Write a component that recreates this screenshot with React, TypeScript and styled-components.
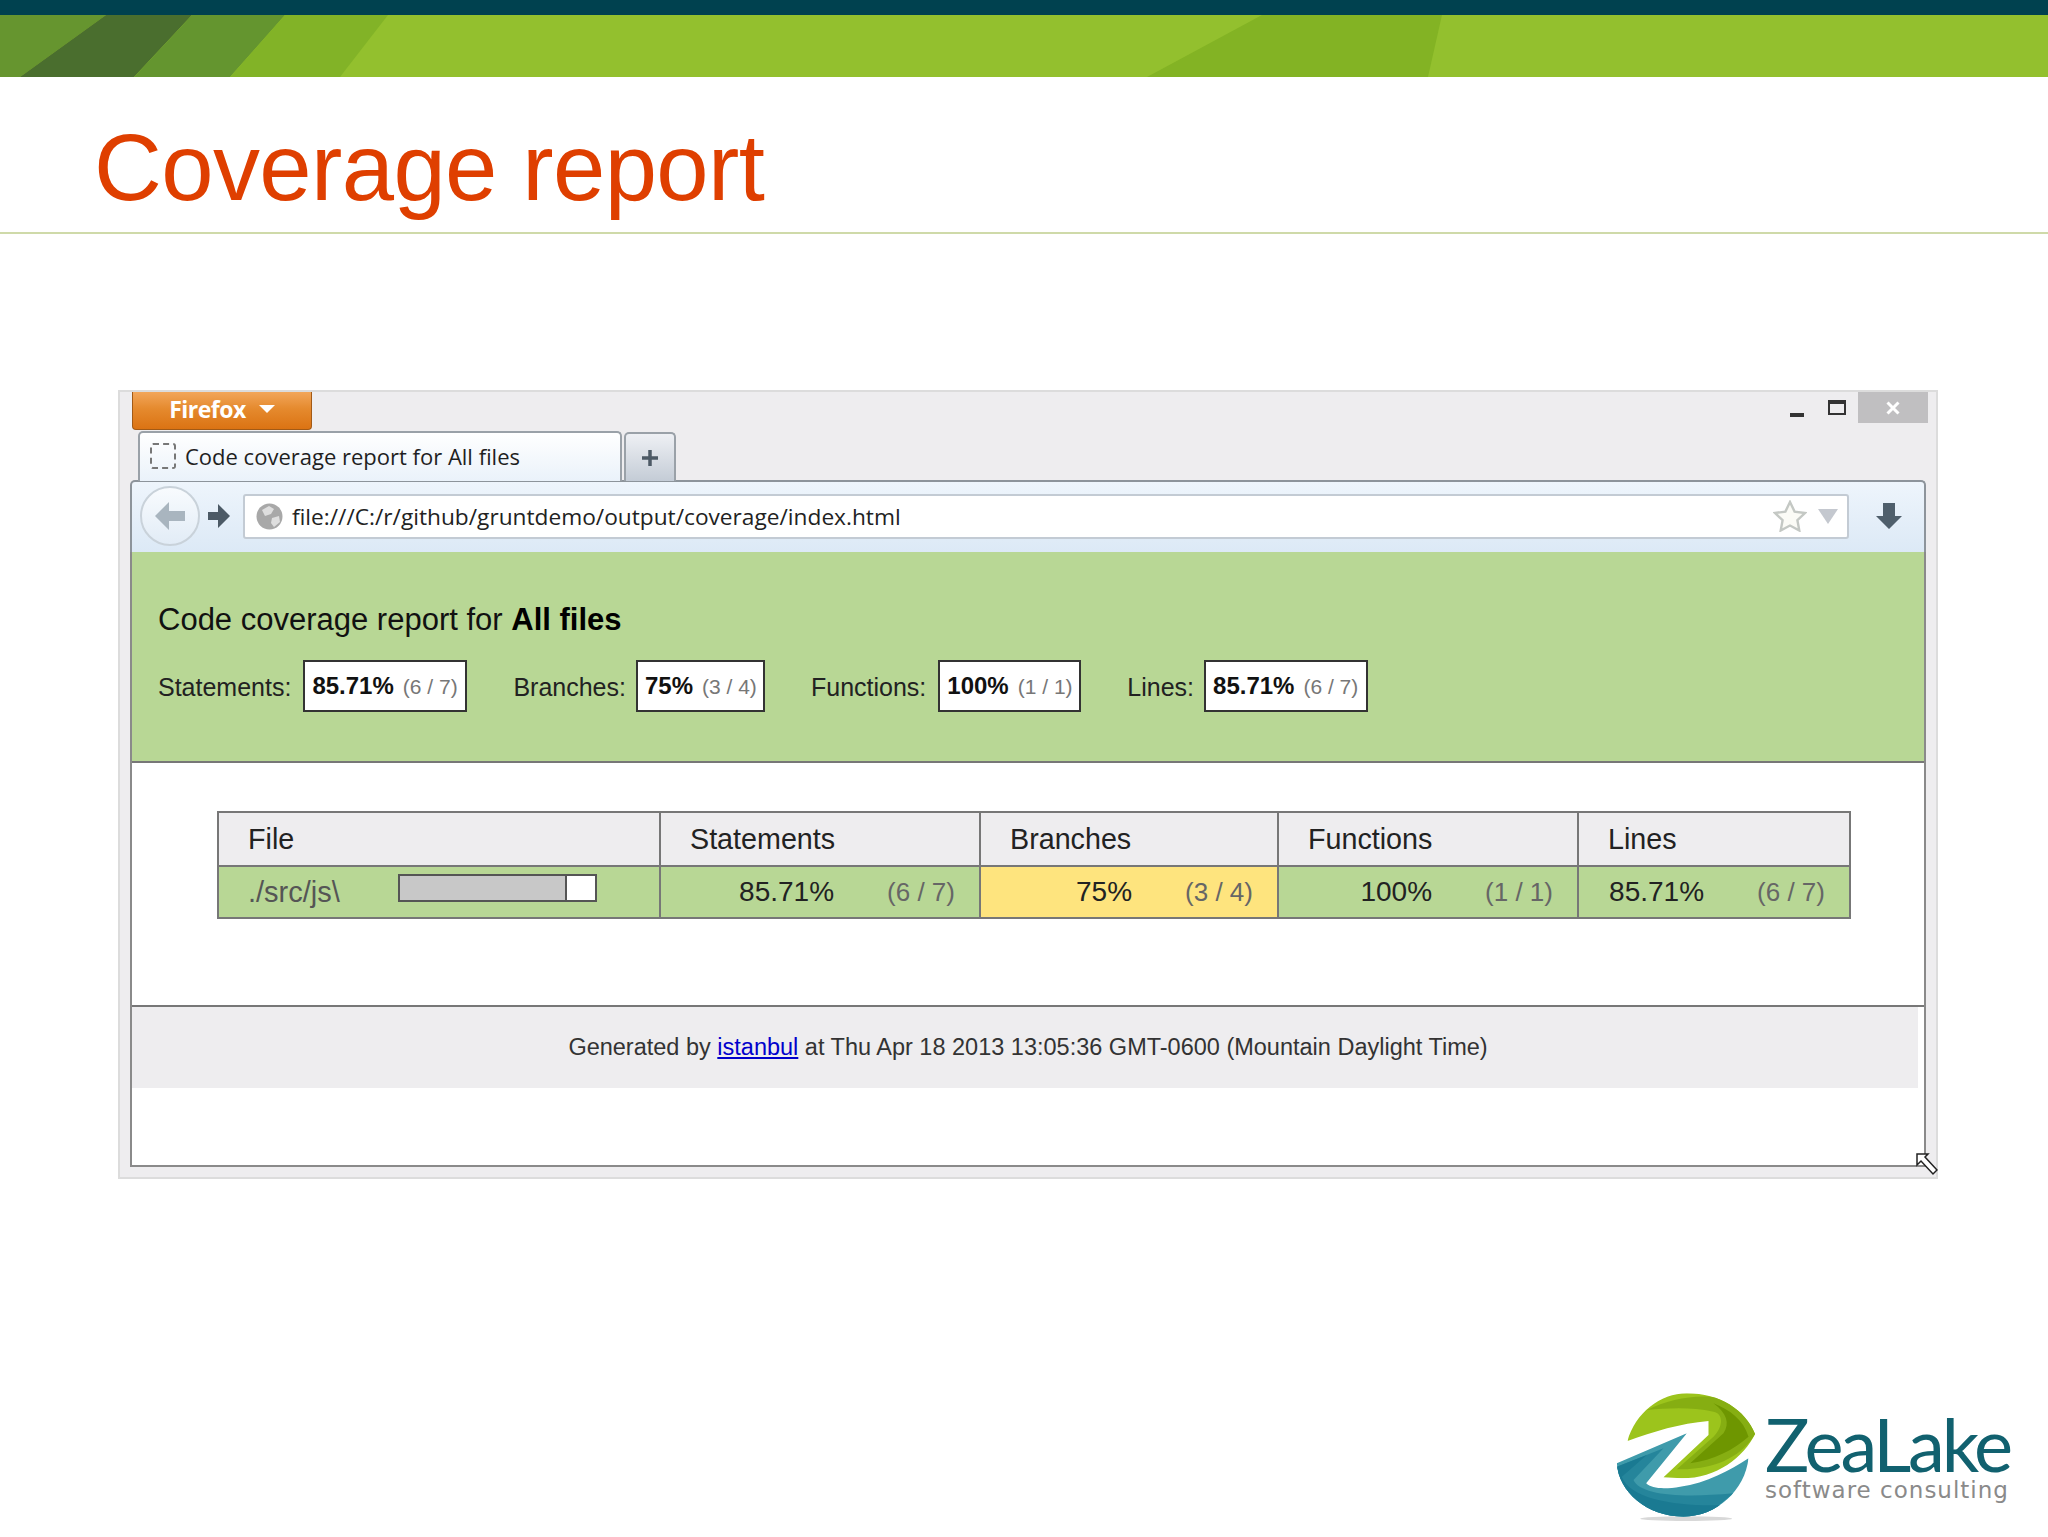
import React from 'react';
import styled, { createGlobalStyle } from 'styled-components';

const GlobalStyle = createGlobalStyle`
  html, body {
    margin: 0;
    padding: 0;
    background: #fff;
    font-family: "Liberation Sans", Arial, sans-serif;
  }
`;

const stats = [
  { label: 'Statements:', pct: '85.71%', frac: '(6 / 7)', width: 164, gap: 0, labelGap: 12 },
  { label: 'Branches:', pct: '75%', frac: '(3 / 4)', width: 129, gap: 46, labelGap: 10 },
  { label: 'Functions:', pct: '100%', frac: '(1 / 1)', width: 143, gap: 46, labelGap: 12 },
  { label: 'Lines:', pct: '85.71%', frac: '(6 / 7)', width: 164, gap: 46, labelGap: 10 },
];

const Banner = () => (
  <BannerWrap>
    <BannerArt viewBox="0 0 2048 62" preserveAspectRatio="none">
      <polygon points="0,0 106,0 20,62 0,62" fill="#66952f" />
      <polygon points="106,0 192,0 134,62 20,62" fill="#4a6e2e" />
      <polygon points="192,0 285,0 230,62 134,62" fill="#64952f" />
      <polygon points="285,0 388,0 340,62 230,62" fill="#82b327" />
      <polygon points="1262,0 1442,0 1428,62 1147,62" fill="#83b324" />
    </BannerArt>
  </BannerWrap>
);

const Logo = () => (
  <LogoMark viewBox="0 0 560 501">
    <defs>
      <clipPath id="topLeaf">
        <path d="M142 213C165 130 240 70 320 70C420 70 495 120 525 192C490 262 410 325 305 325L250 322L385 195L385 153C300 160 220 185 142 213Z" />
      </clipPath>
      <clipPath id="lowLeaf">
        <path d="M110 280L320 190L198 340C215 358 260 357 300 350C380 340 450 300 505 265C495 360 410 440 310 440C200 440 115 365 110 280Z" />
      </clipPath>
    </defs>
    <ellipse cx="318" cy="446" rx="138" ry="7" fill="#d8d8d8" />
    <g clipPath="url(#topLeaf)">
      <rect width="560" height="501" fill="#9cc41c" />
      <path d="M200 120C270 85 360 70 420 85C480 110 510 150 525 192C490 250 420 300 290 298L400 200C430 170 430 130 400 125C330 110 260 115 200 120Z" fill="#86ae12" />
      <path d="M400 100C450 120 490 150 505 200C460 240 400 270 330 280L430 190C450 160 440 130 400 100Z" fill="#6e9600" />
    </g>
    <g clipPath="url(#lowLeaf)">
      <rect width="560" height="501" fill="#3f9bab" />
      <path d="M110 290L250 235L160 330C180 375 300 385 460 370L350 460L130 420Z" fill="#25859b" />
      <path d="M110 290L200 255L125 320C150 390 300 410 430 405L320 460L120 400Z" fill="#1a7a92" />
    </g>
  </LogoMark>
);

export default function App() {
  return (
    <Slide>
      <GlobalStyle />
      <Banner />
      <TitleBar>
        <Title>Coverage report</Title>
      </TitleBar>
      <Body>
        <Window>
          <TitleStrip>
            <FirefoxButton>
              Firefox
              <Caret />
            </FirefoxButton>
            <WindowControls>
              <MinGlyph />
              <MaxGlyph />
              <CloseButton>
                <svg width="14" height="14" viewBox="0 0 14 14">
                  <path d="M1.5 1.5l11 11M12.5 1.5l-11 11" stroke="#fff" strokeWidth="3" />
                </svg>
              </CloseButton>
            </WindowControls>
          </TitleStrip>
          <TabStrip>
            <Tab>
              <FavSlot />
              Code coverage report for All files
            </Tab>
            <NewTab>
              <svg width="20" height="20" viewBox="0 0 20 20">
                <path d="M10 2v16M2 10h16" stroke="#4d5a66" strokeWidth="3.5" />
              </svg>
            </NewTab>
          </TabStrip>
          <Toolbar>
            <BackButton>
              <svg width="32" height="30" viewBox="0 0 32 30">
                <path d="M15 1L1 15l14 14v-9h16V10H15z" fill="#a9b5bf" />
              </svg>
            </BackButton>
            <ForwardIcon width="24" height="26" viewBox="0 0 24 26">
              <path d="M11 1l12 12-12 12v-8H1V9h10z" fill="#4c5a66" />
            </ForwardIcon>
            <UrlBar>
              <svg width="27" height="27" viewBox="0 0 27 27">
                <circle cx="13.5" cy="13.5" r="13" fill="#a8a8a8" />
                <path d="M6 7l7-4 5 3-3 5-6 2zM16 15l7-2 1 6-6 5-3-4z" fill="#dedede" />
              </svg>
              <UrlText>file:///C:/r/github/gruntdemo/output/coverage/index.html</UrlText>
              <svg width="34" height="32" viewBox="0 0 34 32">
                <path d="M17 2l4.6 9.6 10.4 1.4-7.6 7.2 1.9 10.3-9.3-5-9.300 5 1.900-10.300L2 13l10.400-1.400z" fill="#fbfbf6" stroke="#c4c8c4" strokeWidth="2.400" />
              </svg>
              <DropTriangle />
            </UrlBar>
            <DownloadIcon width="28" height="28" viewBox="0 0 28 28">
              <path d="M8 1h12v13h7L14 27 1 14h7z" fill="#4f5f6c" />
            </DownloadIcon>
          </Toolbar>
          <Page>
            <Header>
              <Heading>
                Code coverage report for <strong>All files</strong>
              </Heading>
              <StatRow>
                {stats.map((s) => (
                  <Stat key={s.label} $gap={s.gap}>
                    <StatLabel $gap={s.labelGap}>{s.label}</StatLabel>
                    <StatBox $width={s.width}>
                      <StatPct>{s.pct}</StatPct>
                      <StatFrac>{s.frac}</StatFrac>
                    </StatBox>
                  </Stat>
                ))}
              </StatRow>
            </Header>
            <TableWrap>
              <Table>
                <thead>
                  <tr>
                    <Th $width={442}>File</Th>
                    <Th $width={320}>Statements</Th>
                    <Th $width={298}>Branches</Th>
                    <Th $width={300}>Functions</Th>
                    <Th $width={272}>Lines</Th>
                  </tr>
                </thead>
                <tbody>
                  <tr>
                    <FileCell>
                      <FileInner>
                        <FileName>./src/js\</FileName>
                        <CoverBar>
                          <CoverFill style={{ width: `${(6 / 7) * 100}%` }} />
                        </CoverBar>
                      </FileInner>
                    </FileCell>
                    <Td>
                      <Pct>85.71%</Pct>
                      <Frac>(6 / 7)</Frac>
                    </Td>
                    <Td $warn>
                      <Pct>75%</Pct>
                      <Frac>(3 / 4)</Frac>
                    </Td>
                    <Td>
                      <Pct>100%</Pct>
                      <Frac>(1 / 1)</Frac>
                    </Td>
                    <Td>
                      <Pct>85.71%</Pct>
                      <Frac>(6 / 7)</Frac>
                    </Td>
                  </tr>
                </tbody>
              </Table>
            </TableWrap>
            <PageFooter>
              Generated by <a href="#istanbul">istanbul</a> at Thu Apr 18 2013 13:05:36 GMT-0600 (Mountain Daylight Time)
            </PageFooter>
            <ResizeGrip width="22" height="26" viewBox="0 0 22 26">
              <path d="M1 1h11l-3 3 12 13-4 4L5 8 1 12z" fill="#fff" stroke="#222" strokeWidth="1.500" />
            </ResizeGrip>
          </Page>
        </Window>
      </Body>
      <LogoRow>
        <Logo />
        <LogoText>
          <LogoName>ZeaLake</LogoName>
          <LogoTag>software consulting</LogoTag>
        </LogoText>
      </LogoRow>
    </Slide>
  );
}

const Slide = styled.div`
  width: 2048px;
  height: 1537px;
  overflow: hidden;
  background: #fff;
`;

const BannerWrap = styled.div`
  height: 62px;
  background: #93c02e;
  border-top: 15px solid #00414f;
`;

const BannerArt = styled.svg`
  display: block;
  width: 100%;
  height: 100%;
`;

const TitleBar = styled.div`
  height: 157px;
  box-sizing: border-box;
  padding: 26px 0 0 94px;
  border-bottom: 2px solid #cfdaa9;
  display: flex;
  align-items: center;
`;

const Title = styled.h1`
  margin: 0;
  font-size: 94px;
  font-weight: 400;
  letter-spacing: -0.6px;
  color: #df3f00;
  line-height: 1;
`;

const Body = styled.div`
  padding: 156px 110px 0 118px;
`;

const Window = styled.div`
  position: relative;
  height: 789px;
  background: #eeedef;
  border: 2px solid #dcdcdc;
  box-sizing: border-box;
  padding: 0 10px 10px 10px;
  display: flex;
  flex-direction: column;
`;

const TitleStrip = styled.div`
  height: 39px;
  display: flex;
  justify-content: space-between;
  align-items: flex-start;
  flex: none;
`;

const FirefoxButton = styled.div`
  width: 180px;
  height: 38px;
  margin-left: 2px;
  padding-bottom: 4px;
  box-sizing: border-box;
  display: flex;
  align-items: center;
  justify-content: center;
  gap: 13px;
  color: #fff;
  font-family: "Open Sans", sans-serif;
  font-size: 23px;
  font-weight: 700;
  letter-spacing: -0.5px;
  background: linear-gradient(#f2a65a, #e58a2e 45%, #db7313);
  border: 1px solid #a25a16;
  border-top: none;
  border-radius: 0 0 4px 4px;
`;

const Caret = styled.span`
  width: 0;
  height: 0;
  border-left: 8px solid transparent;
  border-right: 8px solid transparent;
  border-top: 8px solid #fff;
`;

const WindowControls = styled.div`
  display: flex;
  align-items: flex-start;
  margin-right: -2px;
`;

const MinGlyph = styled.span`
  width: 14px;
  height: 4px;
  margin: 21px 24px 0 0;
  background: #333;
`;

const MaxGlyph = styled.span`
  width: 18px;
  height: 15px;
  box-sizing: border-box;
  margin: 8px 12px 0 0;
  border: 2px solid #333;
  border-top-width: 4px;
`;

const CloseButton = styled.span`
  width: 70px;
  height: 31px;
  display: flex;
  align-items: center;
  justify-content: center;
  background: #c0bfc1;
`;

const TabStrip = styled.div`
  height: 50px;
  flex: none;
  display: flex;
  align-items: flex-end;
  gap: 2px;
  padding-left: 8px;
  margin-bottom: -1px;
  position: relative;
  z-index: 1;
`;

const Tab = styled.div`
  width: 484px;
  height: 50px;
  box-sizing: border-box;
  display: flex;
  align-items: center;
  gap: 9px;
  padding: 0 0 2px 10px;
  font-family: "Open Sans", sans-serif;
  font-size: 22px;
  color: #1f1f1f;
  background: linear-gradient(#fff, #eaf2fa);
  border: 2px solid #9aa1a8;
  border-bottom: none;
  border-radius: 5px 5px 0 0;
`;

const FavSlot = styled.span`
  width: 26px;
  height: 26px;
  box-sizing: border-box;
  border: 2px dashed #777;
  border-radius: 3px;
`;

const NewTab = styled.div`
  width: 52px;
  height: 49px;
  box-sizing: border-box;
  display: flex;
  align-items: center;
  justify-content: center;
  background: linear-gradient(#eef0f4, #c4ccd6);
  border: 2px solid #9aa1a8;
  border-bottom: none;
  border-radius: 5px 5px 0 0;
`;

const Toolbar = styled.div`
  height: 72px;
  flex: none;
  box-sizing: border-box;
  display: flex;
  align-items: center;
  background: linear-gradient(#eef5fc, #dce9f6);
  border: 2px solid #8d949b;
  border-bottom: none;
  border-radius: 5px 5px 0 0;
  padding: 0 0 2px 8px;
`;

const BackButton = styled.div`
  width: 60px;
  height: 60px;
  flex: none;
  box-sizing: border-box;
  display: flex;
  align-items: center;
  justify-content: center;
  border-radius: 50%;
  background: linear-gradient(#f8fbfe, #e2ecf6);
  border: 2px solid #c9d2da;
  position: relative;
  z-index: 1;
`;

const ForwardIcon = styled.svg`
  margin-left: 7px;
  flex: none;
`;

const UrlBar = styled.div`
  width: 1606px;
  height: 45px;
  flex: none;
  box-sizing: border-box;
  margin-left: 12px;
  display: flex;
  align-items: center;
  background: #fff;
  border: 2px solid #c3cbd4;
  border-radius: 3px;
  padding: 0 9px 0 11px;
`;

const UrlText = styled.span`
  flex: 1;
  margin-left: 9px;
  font-family: "Open Sans", sans-serif;
  font-size: 22.7px;
  color: #222;
`;

const DropTriangle = styled.span`
  width: 0;
  height: 0;
  margin-left: 11px;
  border-left: 10px solid transparent;
  border-right: 10px solid transparent;
  border-top: 15px solid #c4c8cf;
`;

const DownloadIcon = styled.svg`
  margin-left: 26px;
  flex: none;
`;

const Page = styled.div`
  flex: 1;
  min-height: 0;
  background: #fff;
  border: 2px solid #8a8a8a;
  border-top: none;
  display: flex;
  flex-direction: column;
`;

const Header = styled.div`
  height: 211px;
  flex: none;
  box-sizing: border-box;
  background: #b8d795;
  border-bottom: 2px solid #777;
  padding: 50px 0 0 26px;
`;

const Heading = styled.div`
  font-size: 31px;
  line-height: 36px;
  color: #111;

  strong {
    color: #000;
  }
`;

const StatRow = styled.div`
  display: flex;
  margin-top: 22px;
`;

const Stat = styled.div<{ $gap: number }>`
  display: flex;
  align-items: center;
  margin-left: ${(p) => p.$gap}px;
`;

const StatLabel = styled.span<{ $gap: number }>`
  font-size: 25px;
  padding-top: 2px;
  color: #222;
  margin-right: ${(p) => p.$gap}px;
`;

const StatBox = styled.div<{ $width: number }>`
  width: ${(p) => p.$width}px;
  height: 52px;
  box-sizing: border-box;
  display: flex;
  align-items: center;
  padding-left: 7px;
  gap: 9px;
  white-space: nowrap;
  background: #fff;
  border: 2px solid #333;
`;

const StatPct = styled.span`
  font-size: 24px;
  font-weight: 700;
  color: #111;
`;

const StatFrac = styled.span`
  font-size: 21px;
  color: #777;
  padding-top: 2px;
`;

const TableWrap = styled.div`
  flex: none;
  padding: 48px 0 0 85px;
`;

const Table = styled.table`
  border-collapse: collapse;
  table-layout: fixed;
  width: 1632px;
  font-size: 28px;
  color: #222;
`;

const Th = styled.th<{ $width: number }>`
  width: ${(p) => p.$width}px;
  height: 54px;
  padding: 0 0 0 29px;
  box-sizing: border-box;
  text-align: left;
  font-size: 28.7px;
  font-weight: 400;
  background: #eeedef;
  border: 2px solid #777;
`;

const FileCell = styled.td`
  height: 52px;
  padding: 0 0 0 29px;
  box-sizing: border-box;
  background: #b8d795;
  border: 2px solid #777;
`;

const FileInner = styled.div`
  display: flex;
  align-items: center;
`;

const FileName = styled.span`
  width: 150px;
  font-size: 29px;
  color: #555;
`;

const CoverBar = styled.div`
  width: 199px;
  height: 28px;
  box-sizing: border-box;
  background: #fff;
  border: 2px solid #555;
  margin-top: -9px;
`;

const CoverFill = styled.div`
  height: 100%;
  background: #c8c8c8;
  border-right: 2px solid #555;
  box-sizing: border-box;
`;

const Td = styled.td<{ $warn?: boolean }>`
  height: 52px;
  padding: 0 24px 0 0;
  box-sizing: border-box;
  text-align: right;
  white-space: nowrap;
  background: ${(p) => (p.$warn ? '#fee47e' : '#b8d795')};
  border: 2px solid #777;
`;

const Pct = styled.span`
  margin-right: 53px;
`;

const Frac = styled.span`
  font-size: 26px;
  color: #666;
`;

const PageFooter = styled.div`
  flex: none;
  height: 83px;
  margin-top: 86px;
  box-sizing: border-box;
  display: flex;
  align-items: center;
  justify-content: center;
  white-space: pre-wrap;
  font-size: 23.5px;
  color: #333;
  background: linear-gradient(to right, #eeedef calc(100% - 6px), #fff 0);
  border-top: 2px solid #777;

  a {
    color: #0000cc;
  }
`;

const ResizeGrip = styled.svg`
  position: absolute;
  right: -2px;
  bottom: -2px;
`;

const LogoRow = styled.div`
  display: flex;
  justify-content: flex-end;
  padding: 0 40px 0 0;
  margin-top: 191px;
`;

const LogoMark = styled.svg`
  width: 187px;
  height: 167px;
  flex: none;
`;

const LogoText = styled.div`
  width: 243px;
  margin-top: 42px;
  margin-left: -2px;
`;

const LogoName = styled.div`
  font-family: Lato, sans-serif;
  font-size: 74px;
  letter-spacing: -3.2px;
  line-height: 63px;
  white-space: nowrap;
  color: #11616f;
`;

const LogoTag = styled.div`
  font-family: "DejaVu Sans", sans-serif;
  font-size: 23px;
  letter-spacing: 1px;
  white-space: nowrap;
  line-height: 30px;
  color: #8a8a8a;
`;
